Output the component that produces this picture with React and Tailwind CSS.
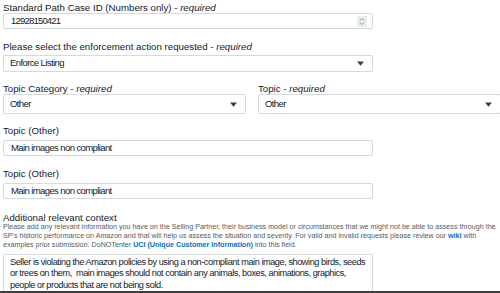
import { useState } from "react";

const font = { fontFamily: '"Liberation Sans", Arial, sans-serif' };

function Label({ children, req, className = "" }) {
  return (
    <div className={`text-[9.7px] leading-[11px] text-[#16191f] whitespace-nowrap ${className}`}>
      {children}
      {req && (
        <>
          {" - "}
          <i>required</i>
        </>
      )}
    </div>
  );
}

function Arrow() {
  return (
    <svg width="7" height="5" viewBox="0 0 7 5" className="shrink-0">
      <path d="M0 0.5h7L3.5 4.8z" fill="#3b3f42" />
    </svg>
  );
}

function Select({ value, className = "" }) {
  return (
    <div
      className={`flex items-center justify-between border border-[#d5dbdb] rounded-[2px] bg-white pl-[6px] pr-[8px] text-[9.5px] tracking-[-0.6px] text-[#16191f] ${className}`}
    >
      <span>{value}</span>
      <Arrow />
    </div>
  );
}

function TextInput({ value, className = "" }) {
  return (
    <div
      className={`flex items-center border border-[#d5dbdb] rounded-[2px] bg-white pl-[7px] text-[9.5px] tracking-[-0.6px] text-[#16191f] w-[370px] ${className}`}
    >
      {value}
    </div>
  );
}

export default function App() {
  const [caseId] = useState("12928150421");

  return (
    <div className="w-[500px] h-[293px] overflow-hidden bg-white flex flex-col" style={font}>
      <div className="flex-1 min-h-0 flex flex-col px-[3px] pt-[2px] overflow-hidden">
        <Label req>Standard Path Case ID (Numbers only)</Label>
        <div className="flex items-center justify-between border border-[#d5dbdb] rounded-[2px] w-[370px] h-[18px] pl-[7px] pr-[5px] text-[9.5px] tracking-[-0.8px] text-[#16191f]">
          <span>{caseId}</span>
          <div className="w-[10px] h-[11px] bg-[#eaeded] flex flex-col items-center justify-center gap-[1px]">
            <svg width="6" height="3" viewBox="0 0 6 3">
              <path d="M0.5 2.7L3 0.5L5.5 2.7" stroke="#8d9496" strokeWidth="0.9" fill="none" />
            </svg>
            <svg width="6" height="3" viewBox="0 0 6 3">
              <path d="M0.5 0.3L3 2.5L5.5 0.3" stroke="#8d9496" strokeWidth="0.9" fill="none" />
            </svg>
          </div>
        </div>

        <Label req className="mt-[11.5px]">Please select the enforcement action requested</Label>
        <Select value="Enforce Listing" className="w-[370px] h-[18px] mt-[3.5px]" />

        <div className="grid grid-cols-[243px_243px] gap-x-[12px] mt-[11px]">
          <Label req>Topic Category</Label>
          <Label req>Topic</Label>
          <Select value="Other" className="h-[20px] mt-[0.5px]" />
          <Select value="Other" className="h-[20px] mt-[0.5px]" />
        </div>

        <Label className="mt-[11px]">Topic (Other)</Label>
        <TextInput value="Main images non compliant" className="h-[18px] mt-[3.5px]" />

        <Label className="mt-[12px]">Topic (Other)</Label>
        <TextInput value="Main images non compliant" className="h-[18px] mt-[3.5px]" />

        <Label className="mt-[12.5px]">Additional relevant context</Label>
        <div className="text-[7.15px] leading-[9px] text-[#545b64] whitespace-nowrap">
          Please add any relevant information you have on the Selling Partner, their business model or circumstances that we might not be able to assess through the
          <br />
          SP's historic performance on Amazon and that will help us assess the situation and severity. For valid and invalid requests please review our{" "}
          <span className="font-bold text-[#0073bb]">wiki</span> with
          <br />
          examples prior submission. DoNOTenter{" "}
          <span className="font-bold text-[#0073bb]">UCI (Unique Customer Information)</span> into this field.
        </div>
        <div className="mt-[4px] w-[370px] flex-1 border border-b-0 border-[#d5dbdb] rounded-t-[2px] px-[6px] pt-[2px] text-[9.2px] leading-[11.5px] tracking-[-0.45px] text-[#16191f] whitespace-pre">
          {"Seller is violating the Amazon policies by using a non-compliant main image, showing birds, seeds\nor trees on them,  main images should not contain any animals, boxes, animations, graphics,\npeople or products that are not being sold."}
        </div>
      </div>
      <div className="h-[2px] bg-[#3d3d3d] shrink-0" />
    </div>
  );
}
